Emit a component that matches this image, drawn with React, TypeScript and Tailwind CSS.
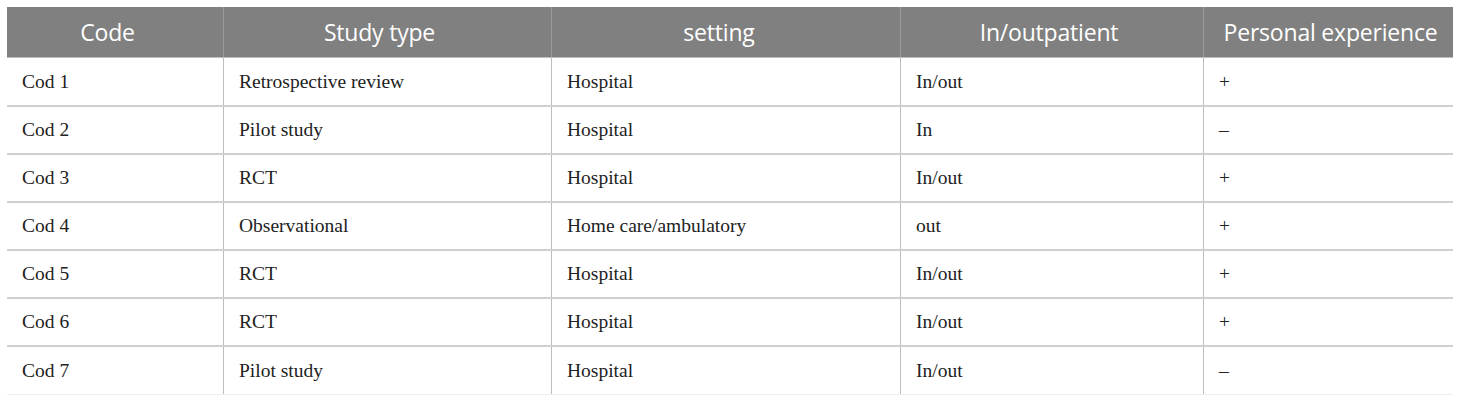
const columns = ['Code', 'Study type', 'setting', 'In/outpatient', 'Personal experience'];

const widths = ['w-[216px]', 'w-[328px]', 'w-[349px]', 'w-[303px]', 'w-[250px]'];
// header labels sit a little left of centre
const headPad = ['pr-[15px]', 'pr-[16px]', 'pr-[14px]', 'pr-[6px]', 'pl-[4px]'];

const rows = [
  ['Cod 1', 'Retrospective review', 'Hospital', 'In/out', '+'],
  ['Cod 2', 'Pilot study', 'Hospital', 'In', '–'],
  ['Cod 3', 'RCT', 'Hospital', 'In/out', '+'],
  ['Cod 4', 'Observational', 'Home care/ambulatory', 'out', '+'],
  ['Cod 5', 'RCT', 'Hospital', 'In/out', '+'],
  ['Cod 6', 'RCT', 'Hospital', 'In/out', '+'],
  ['Cod 7', 'Pilot study', 'Hospital', 'In/out', '–'],
];

export default function App() {
  return (
    <div className="w-[1460px] h-[404px] bg-white pt-[7px] pl-[7px]">
      <div className="w-[1446px]">
        {/* Header */}
        <div className="flex h-[51px] bg-[#808080] border-b border-[#bdbdbd]">
          {columns.map((col, i) => (
            <div
              key={col}
              className={`${widths[i]} ${headPad[i]} flex items-center justify-center text-white text-[23px] font-['Open_Sans',sans-serif] tracking-[-0.2px] whitespace-nowrap ${
                i > 0 ? 'border-l border-[#9a9a9a]' : ''
              }`}
            >
              {col}
            </div>
          ))}
        </div>

        {/* Body */}
        {rows.map((row, r) => (
          <div
            key={r}
            className={`flex ${r === 0 ? 'h-[49px]' : 'h-[48px]'} ${
              r < rows.length - 1 ? 'border-b-2 border-[#d0d0d0]' : 'border-b border-[#eeeeee]'
            }`}
          >
            {row.map((cell, i) => (
              <div
                key={i}
                className={`${widths[i]} flex items-center pl-[15px] text-[19.5px] text-[#222222] font-['Liberation_Serif',serif] ${
                  i > 0 ? 'border-l border-[#bdbdbd]' : ''
                }`}
              >
                {cell}
              </div>
            ))}
          </div>
        ))}
      </div>
    </div>
  );
}
